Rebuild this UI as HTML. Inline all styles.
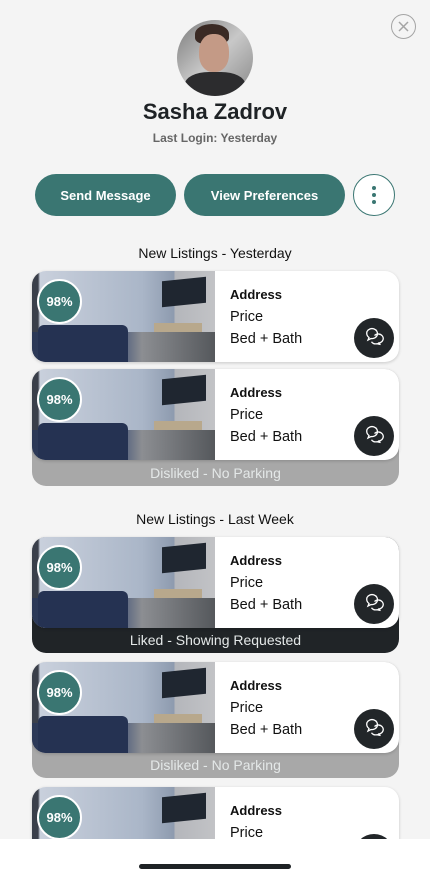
<!DOCTYPE html>
<html><head><meta charset="utf-8"><style>
*{margin:0;padding:0;box-sizing:border-box}
body{width:430px;height:878px;overflow:hidden;background:#f4f4f4;font-family:"Liberation Sans",sans-serif;position:relative;color:#111}
.abs{position:absolute}
.btn{position:absolute;top:174px;height:42px;border-radius:21px;background:#3a7672;color:#fff;font-weight:bold;font-size:13px;display:flex;align-items:center;justify-content:center}
.sec{position:absolute;left:0;width:430px;text-align:center;font-size:14px;color:#111}
.wrap{position:absolute;left:32px;width:367px;border-radius:14px}
.card{position:absolute;left:0;top:0;width:367px;height:91px;border-radius:14px;background:#fff;overflow:hidden;box-shadow:0 1px 3px rgba(0,0,0,.18)}
.img{position:absolute;left:0;top:0;width:183px;height:91px;background:linear-gradient(90deg,#3a3f4a 0,#3a3f4a 6px,#c9d0dc 8px,#aab6c8 60%,#8d9aae 78%,#b4b6bb 78%,#c2c3c6 100%)}
.floor{position:absolute;left:0;bottom:0;width:183px;height:30px;background:linear-gradient(90deg,#2b3856,#3a4c74 45%,#8c8e92 60%,#55585c 100%)}
.tv{position:absolute;left:130px;top:8px;width:44px;height:26px;background:#1f2630;transform:skewY(-6deg)}
.shelf{position:absolute;left:122px;top:52px;width:48px;height:20px;background:#b8a88c}
.sofa{position:absolute;left:6px;top:54px;width:90px;height:37px;background:#253252;border-radius:6px 6px 0 0}
.badge{position:absolute;left:5px;top:8px;width:45px;height:45px;border-radius:50%;background:#3a7672;border:2px solid #fff;color:#fff;font-weight:bold;font-size:13px;display:flex;align-items:center;justify-content:center}
.info{position:absolute;left:198px;top:13px;font-size:14.5px;line-height:22px;color:#111}
.info b{display:block;font-size:13px}
.chat{position:absolute;left:322px;top:47px;width:40px;height:40px;border-radius:50%;background:#222629}
.foot{position:absolute;left:0;bottom:0;width:367px;height:40px;border-radius:0 0 14px 14px;display:flex;align-items:flex-end;justify-content:center;padding-bottom:5px;font-size:14px;color:#e4e8e8}
</style></head><body>
<div class="abs" style="left:391px;top:14px;width:25px;height:25px;border-radius:50%;border:1.5px solid #a4a4a4"></div>
<svg class="abs" style="left:391px;top:14px" width="25" height="25"><path d="M8 8L17 17M17 8L8 17" stroke="#a4a4a4" stroke-width="1.5"/></svg>
<div class="abs" style="left:177px;top:20px;width:76px;height:76px;border-radius:50%;overflow:hidden;background:linear-gradient(135deg,#7a7a7a,#c8c8c8 50%,#888 100%)">
 <div class="abs" style="left:18px;top:4px;width:34px;height:20px;border-radius:50% 50% 30% 30%;background:#3a2a24"></div>
 <div class="abs" style="left:22px;top:14px;width:30px;height:38px;border-radius:45%;background:#c49a86"></div>
 <div class="abs" style="left:8px;top:52px;width:60px;height:30px;border-radius:40% 40% 0 0;background:#2c2c2e"></div>
</div>
<div class="abs" style="left:0;top:99px;width:430px;text-align:center;font-size:22px;font-weight:bold;color:#1e2225">Sasha Zadrov</div>
<div class="abs" style="left:0;top:131px;width:430px;text-align:center;font-size:12px;font-weight:bold;color:#666">Last Login: Yesterday</div>
<div class="btn" style="left:35px;width:141px">Send Message</div>
<div class="btn" style="left:184px;width:161px">View Preferences</div>
<div class="abs" style="left:353px;top:174px;width:42px;height:42px;border-radius:50%;border:1.2px solid #3a7672;background:#fff"></div>
<div class="abs" style="left:372px;top:186px;width:4px;height:4px;border-radius:50%;background:#3a7672;box-shadow:0 7px 0 #3a7672,0 14px 0 #3a7672"></div>

<div class="sec" style="top:245px">New Listings - Yesterday</div>
<div class="sec" style="top:511px">New Listings - Last Week</div>

<div class="wrap" style="top:271px;height:91px"></div>
<div class="wrap" style="top:369px;height:117px;background:#a8a8a8"><div class="foot">Disliked - No Parking</div></div>
<div class="wrap" style="top:537px;height:116px;background:#202427"><div class="foot">Liked - Showing Requested</div></div>
<div class="wrap" style="top:662px;height:116px;background:#a8a8a8"><div class="foot">Disliked - No Parking</div></div>
<div class="wrap" style="top:787px;height:91px"></div>

<script>
document.querySelectorAll('.wrap').forEach(function(w){
 var c=document.createElement('div');c.className='card';
 c.innerHTML='<div class="img"><div class="tv"></div><div class="shelf"></div><div class="floor"></div><div class="sofa"></div><div class="badge">98%</div></div><div class="info"><b>Address</b>Price<br>Bed + Bath</div><div class="chat"><svg width="40" height="40" viewBox="0 0 40 40"><path d="M13 13.5a5.5 5 0 1 1 4 7l-3 1.5 1-2.5a5 5 0 0 1 -2-6z" fill="none" stroke="#fff" stroke-width="1.3"/><path d="M20.5 17.5a5 4.5 0 1 1 3.5 7.5l2.5 1.5-3.5-.8a5 4.5 0 0 1 -5.5-2" fill="none" stroke="#fff" stroke-width="1.3"/></svg></div>';
 w.insertBefore(c,w.firstChild);
});
</script>
<div class="abs" style="left:0;top:839px;width:430px;height:39px;background:#fff"></div>
<div class="abs" style="left:139px;top:864px;width:152px;height:5px;border-radius:3px;background:#1e2225"></div>
</body></html>
